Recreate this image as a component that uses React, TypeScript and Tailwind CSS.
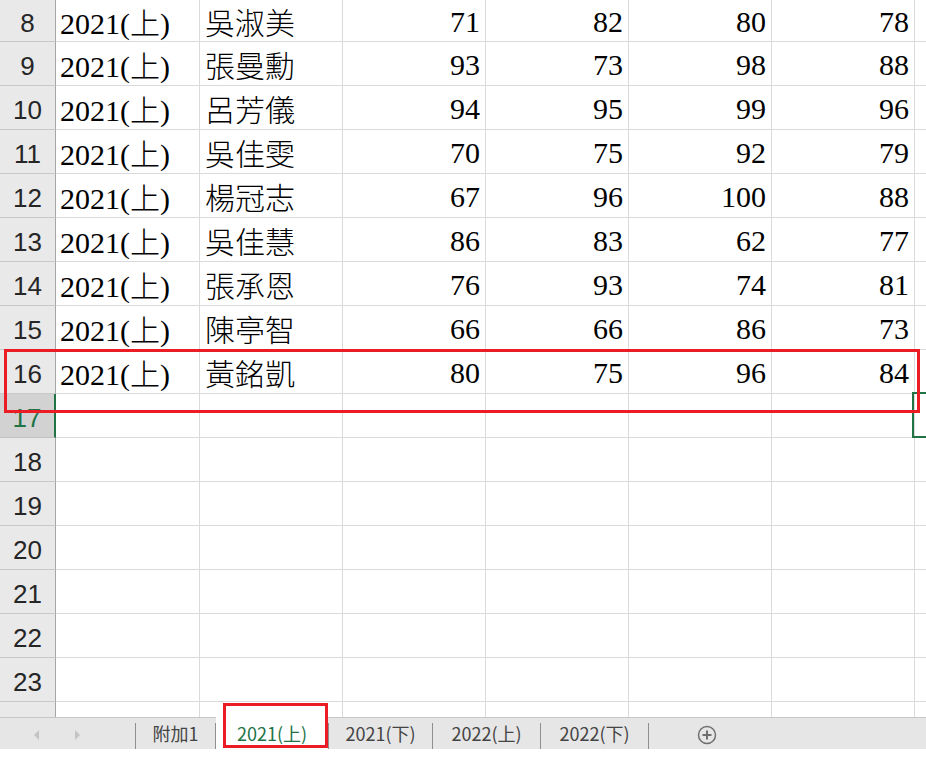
import React from 'react';

interface Row {
    n: number;
    year?: string;
    name?: string;
    scores?: number[];
}

const rows: Row[] = [
    { n: 8, year: '2021(上)', name: '吳淑美', scores: [71, 82, 80, 78] },
    { n: 9, year: '2021(上)', name: '張曼勳', scores: [93, 73, 98, 88] },
    { n: 10, year: '2021(上)', name: '呂芳儀', scores: [94, 95, 99, 96] },
    { n: 11, year: '2021(上)', name: '吳佳雯', scores: [70, 75, 92, 79] },
    { n: 12, year: '2021(上)', name: '楊冠志', scores: [67, 96, 100, 88] },
    { n: 13, year: '2021(上)', name: '吳佳慧', scores: [86, 83, 62, 77] },
    { n: 14, year: '2021(上)', name: '張承恩', scores: [76, 93, 74, 81] },
    { n: 15, year: '2021(上)', name: '陳亭智', scores: [66, 66, 86, 73] },
    { n: 16, year: '2021(上)', name: '黃銘凱', scores: [80, 75, 96, 84] },
    { n: 17 },
    { n: 18 },
    { n: 19 },
    { n: 20 },
    { n: 21 },
    { n: 22 },
    { n: 23 },
];

const tabs = ['附加1', '2021(上)', '2021(下)', '2022(上)', '2022(下)'];

const SheetRow = ({ row, first }: { row: Row; first: boolean }) => {
    const selected = row.n === 17;
    const h = first ? 'h-[42px]' : 'h-[44px]';
    return (
        <div className={`flex ${h}`}>
            {/* row header */}
            <div
                className={
                    selected
                        ? 'w-[56px] shrink-0 flex items-center justify-center pt-[4px] bg-[#d2d2d2] text-[#217346] border-b border-[#c2c2c2] border-r-2 border-r-[#217346]'
                        : 'w-[56px] shrink-0 flex items-center justify-center pt-[4px] bg-[#e9e9e9] text-[#262626] border-b border-[#c8c8c8] border-r border-r-[#a6a6a6]'
                }
            >
                <span className="[font-family:'Liberation_Sans',Arial,sans-serif] text-[26px] leading-none">{row.n}</span>
            </div>
            {/* A */}
            <div className="w-[144px] shrink-0 flex items-center pl-[4px] pt-[3px] border-r border-b border-[#dadada]">
                <span className="text-[30px] leading-none whitespace-nowrap">
                    {row.year && (
                        <>
                            2021(<span className="[font-family:'Noto_Sans_CJK_TC',sans-serif] font-light">上</span>)
                        </>
                    )}
                </span>
            </div>
            {/* B */}
            <div className="w-[143px] shrink-0 flex items-center pl-[5px] pt-[0px] border-r border-b border-[#dadada]">
                <span className="[font-family:'Noto_Sans_CJK_TC',sans-serif] font-light text-[30px] leading-none whitespace-nowrap">
                    {row.name}
                </span>
            </div>
            {/* C-F */}
            {[0, 1, 2, 3].map((i) => (
                <div
                    key={i}
                    className="w-[143px] shrink-0 flex items-center justify-end pr-[5px] pt-[3px] border-r border-b border-[#dadada]"
                >
                    <span className="text-[30px] leading-none">{row.scores ? row.scores[i] : ''}</span>
                </div>
            ))}
            {/* G */}
            <div className="w-[143px] shrink-0 border-r border-b border-[#dadada]" />
        </div>
    );
};

export default function App() {
    return (
        <div className="relative w-[926px] h-[761px] overflow-hidden bg-white text-black [font-family:'Liberation_Serif','Times_New_Roman',serif]">
            {/* sheet */}
            <div className="h-[717px] overflow-hidden">
                {rows.map((r, i) => (
                    <SheetRow key={r.n} row={r} first={i === 0} />
                ))}
                {/* partial row 24 */}
                <div className="flex h-[20px]">
                    <div className="w-[56px] shrink-0 bg-[#e9e9e9] border-r border-[#a6a6a6]" />
                    <div className="w-[144px] shrink-0 border-r border-[#dadada]" />
                    <div className="w-[143px] shrink-0 border-r border-[#dadada]" />
                    <div className="w-[143px] shrink-0 border-r border-[#dadada]" />
                    <div className="w-[143px] shrink-0 border-r border-[#dadada]" />
                    <div className="w-[143px] shrink-0 border-r border-[#dadada]" />
                    <div className="w-[143px] shrink-0 border-r border-[#dadada]" />
                    <div className="w-[143px] shrink-0 border-r border-[#dadada]" />
                </div>
            </div>

            {/* sheet tabs */}
            <div className="flex h-[32px] bg-[#e6e6e6] border-t border-[#c6c6c6] [font-family:'Noto_Sans_CJK_TC',sans-serif] text-[18px] text-[#444]">
                <div className="w-[135px] shrink-0 flex items-center pt-[2px]">
                    <span className="ml-[34px] w-0 h-0 border-y-[5px] border-y-transparent border-r-[5px] border-r-[#c4c4c4]" />
                    <span className="ml-[36px] w-0 h-0 border-y-[5px] border-y-transparent border-l-[5px] border-l-[#c4c4c4]" />
                </div>
                {tabs.map((t, i) => {
                    const active = i === 1;
                    return (
                        <React.Fragment key={t}>
                            <span className="w-px h-[26px] self-end bg-[#8f8f8f]" />
                            {active ? (
                                <div className="w-[112px] -mt-px h-[32px] bg-white flex items-center justify-center pt-[1px] text-[#217346]">
                                    {t}
                                </div>
                            ) : (
                                <div
                                    className={`${i === 0 ? 'w-[79px]' : i === 2 ? 'w-[103px]' : 'w-[107px]'} flex items-center justify-center`}
                                >
                                    {t}
                                </div>
                            )}
                        </React.Fragment>
                    );
                })}
                <span className="w-px h-[26px] self-end bg-[#8f8f8f]" />
                <div className="ml-[48px] flex items-center pt-[2px]">
                    <svg width="20" height="20" viewBox="0 0 20 20" fill="none" stroke="#6f6f6f">
                        <circle cx="10" cy="10" r="8.5" strokeWidth="1.5" />
                        <path d="M10 5.5v9M5.5 10h9" strokeWidth="2" />
                    </svg>
                </div>
            </div>

            {/* selected cell G17 */}
            <div className="absolute left-[912px] top-[392px] w-[30px] h-[46px] border-2 border-[#217346]" />

            {/* red annotation boxes */}
            <div className="absolute left-[4px] top-[349px] w-[916px] h-[64px] border-[3px] border-[#ec1c24]" />
            <div className="absolute left-[223px] top-[703px] w-[105px] h-[45px] border-[3px] border-[#ec1c24]" />
        </div>
    );
}
